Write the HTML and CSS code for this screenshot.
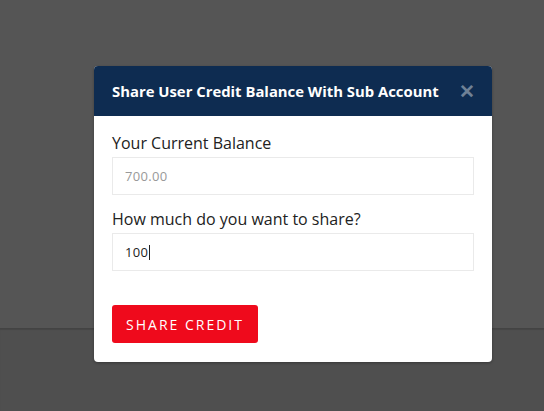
FILE: index.html
```html
<!DOCTYPE html>
<html>
<head>
<meta charset="utf-8">
<link rel="stylesheet" href="styles.css">
</head>
<body>
<div class="page">
  <div class="page-top"></div>
  <div class="page-bottom"></div>
</div>
<div class="modal">
  <div class="modal-header">
    <h2 class="modal-title">Share User Credit Balance With Sub Account</h2>
    <span class="close">&#x2715;</span>
  </div>
  <div class="modal-body">
    <label class="label">Your Current Balance</label>
    <div class="input input-disabled">700.00</div>
    <label class="label label-second">How much do you want to share?</label>
    <div class="input">100<span class="caret"></span></div>
    <button class="btn">SHARE CREDIT</button>
  </div>
</div>
</body>
</html>
```
FILE: styles.css
```css
* { box-sizing: border-box; }
html, body { margin: 0; padding: 0; }
body {
  width: 544px;
  height: 411px;
  overflow: hidden;
  font-family: "Open Sans", "Liberation Sans", sans-serif;
  background: #555555;
  position: relative;
}
.page { display: flex; flex-direction: column; height: 411px; }
.page-top { height: 328px; background: #555555; }
.page-bottom {
  flex: 1;
  background: #4f4f4f;
  border-top: 1px solid #434343;
  box-shadow: inset 0 1px 1px rgba(0,0,0,0.12);
}
.modal {
  position: absolute;
  left: 94px;
  top: 66px;
  width: 398px;
  height: 296px;
  background: #fff;
  border-radius: 4px;
  overflow: hidden;
  box-shadow: 0 1px 3px rgba(0,0,0,0.3);
}
.modal-header {
  height: 50px;
  background: #0e2c51;
  display: flex;
  align-items: center;
  justify-content: space-between;
  padding: 0 17px 0 18px;
}
.modal-title {
  margin: 0;
  color: #fff;
  font-size: 14.85px;
  font-weight: 700;
  letter-spacing: 0;
}
.close {
  color: #6f8196;
  font-size: 19px;
  font-weight: 700;
  line-height: 1;
}
.modal-body {
  padding: 17px 18px 0 18px;
  display: flex;
  flex-direction: column;
  align-items: flex-start;
}
.label {
  font-size: 16px;
  color: #222;
  line-height: 20px;
  height: 20px;
  margin-bottom: 4px;
}
.label-second { margin-top: 14px; }
.input {
  width: 362px;
  height: 38px;
  border: 1px solid #eaeaea;
  padding: 0 12px;
  font-size: 13px;
  color: #222;
  display: flex;
  align-items: center;
  letter-spacing: 0.3px;
}
.input-disabled { color: #999; }
.caret {
  display: inline-block;
  width: 1px;
  height: 15px;
  background: #222;
  margin-left: 1px;
}
.btn {
  margin-top: 34px;
  width: 146px;
  height: 38px;
  background: #ef0a1c;
  color: #fff;
  border: none;
  border-radius: 3px;
  font-family: "Open Sans", "Liberation Sans", sans-serif;
  font-size: 14px;
  letter-spacing: 2px;
  padding: 0;
}
```
